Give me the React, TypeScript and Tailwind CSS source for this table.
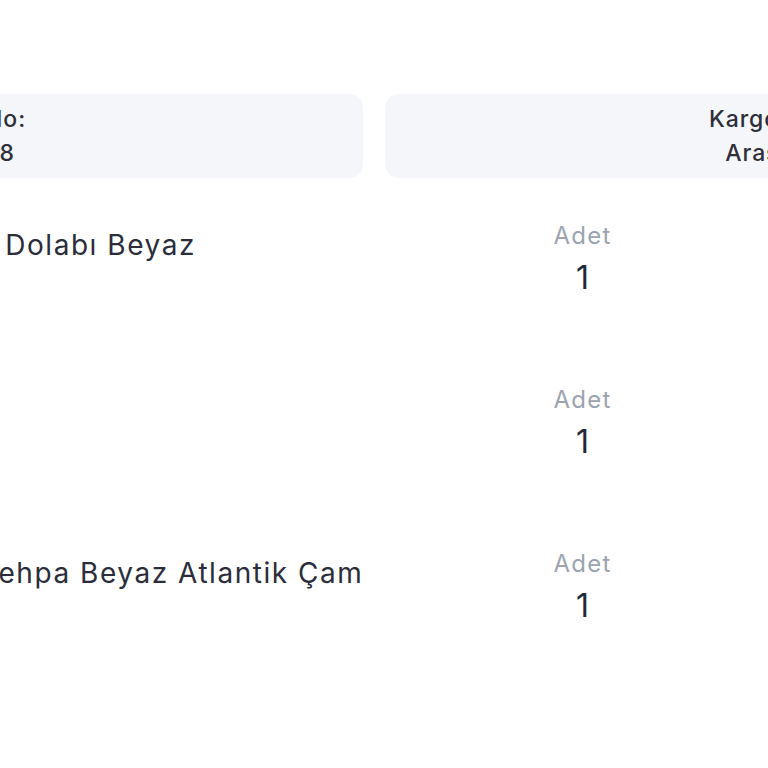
import React from "react";

const items = [
  { name: "Banyo Dolabı Beyaz", qty: 1 },
  { name: "", qty: 1 },
  { name: "Orta Sehpa Beyaz Atlantik Çam", qty: 1 },
];

export default function App() {
  return (
    <div className="w-[768px] h-[768px] overflow-hidden bg-white" style={{ fontFamily: "Inter, 'Noto Sans', sans-serif" }}>
      <div className="w-[1348px] -ml-[300px] pt-[94px]">
        <div className="grid grid-cols-2 gap-[22px]">
          <div className="h-[84px] rounded-[14px] bg-[#f5f6f9] flex flex-col justify-center pl-[196px] text-[23px] font-medium tracking-[0.04em] leading-[34px] text-[#2d2f3b]">
            <span>Sipariş No:</span>
            <span>12345648</span>
          </div>
          <div className="h-[84px] rounded-[14px] bg-[#f5f6f9] flex items-center pl-[324px]">
            <div className="flex flex-col items-center text-[23px] font-medium tracking-[0.04em] leading-[34px] text-[#2d2f3b]">
              <span>Kargo Firması</span>
              <span>Aras Kargo</span>
            </div>
          </div>
        </div>
        <div className="flex flex-col mt-[44px]">
          {items.map((it, i) => (
            <div key={i} className="h-[164px] flex">
              <div className="w-[200px] shrink-0" />
              <div className="w-[652px] shrink-0 text-[28px] tracking-[0.055em] text-[#2b2d3a] leading-[36px] pt-[5px] pl-[6px]">{it.name}</div>
              <div className="flex flex-col items-center w-[61px]">
                <span className="text-[24px] tracking-[0.05em] text-[#9ca3af] leading-[30px] -mt-[1px]">Adet</span>
                <span className="text-[32px] text-[#1f2937] leading-[40px] mt-[7px]">{it.qty}</span>
              </div>
            </div>
          ))}
        </div>
      </div>
    </div>
  );
}
